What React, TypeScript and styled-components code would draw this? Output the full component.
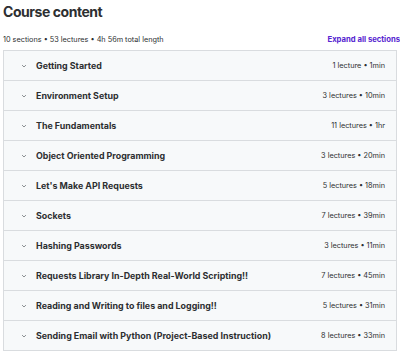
import React from "react";
import styled, { createGlobalStyle } from "styled-components";

const Global = createGlobalStyle`
  html, body { margin: 0; padding: 0; background: #fff; }
  body { font-family: Inter, "Noto Sans", sans-serif; color: #2d2f31; }
`;

const Page = styled.div`
  width: 400px;
  height: 352px;
  overflow: hidden;
  padding: 0 0 0 3px;
  box-sizing: border-box;
`;

const Title = styled.h2`
  margin: 0;
  padding-top: 2px;
  font-size: 14px;
  font-weight: 700;
  line-height: 20px;
  letter-spacing: -0.45px;
  color: #2d2f31;
`;

const Meta = styled.div`
  display: flex;
  justify-content: space-between;
  align-items: center;
  margin-top: 12px;
  height: 12px;
  font-size: 7.3px;
  line-height: 12px;
`;

const Summary = styled.span`
  color: #2d2f31;
`;

const Expand = styled.button`
  border: none;
  background: none;
  padding: 0;
  font: inherit;
  font-size: 7.7px;
  font-weight: 700;
  color: #5624d0;
  cursor: pointer;
`;

const List = styled.div`
  margin-top: 4px;
  width: 394px;
  border: 1px solid #d9dcdf;
  box-sizing: border-box;
`;

const Row = styled.div`
  display: flex;
  align-items: center;
  height: 29px;
  padding: 0 11px 0 16px;
  background: #f7f9fa;
  border-top: 1px solid #d9dcdf;
  &:first-child { border-top: none; }
`;

const Chevron = styled.svg`
  width: 8px;
  height: 8px;
  flex: none;
  color: #555a5e;
`;

const SectionTitle = styled.span`
  flex: 1;
  margin-left: 8px;
  font-size: 8.9px;
  font-weight: 700;
  color: #2d2f31;
  white-space: nowrap;
`;

const SectionMeta = styled.span`
  font-size: 7.3px;
  color: #2d2f31;
  white-space: nowrap;
`;

const sections: [string, string][] = [
  ["Getting Started", "1 lecture • 1min"],
  ["Environment Setup", "3 lectures • 10min"],
  ["The Fundamentals", "11 lectures • 1hr"],
  ["Object Oriented Programming", "3 lectures • 20min"],
  ["Let's Make API Requests", "5 lectures • 18min"],
  ["Sockets", "7 lectures • 39min"],
  ["Hashing Passwords", "3 lectures • 11min"],
  ["Requests Library In-Depth Real-World Scripting!!", "7 lectures • 45min"],
  ["Reading and Writing to files and Logging!!", "5 lectures • 31min"],
  ["Sending Email with Python (Project-Based Instruction)", "8 lectures • 33min"],
];

export default function App() {
  return (
    <Page>
      <Global />
      <Title>Course content</Title>
      <Meta>
        <Summary>10 sections • 53 lectures • 4h 56m total length</Summary>
        <Expand>Expand all sections</Expand>
      </Meta>
      <List>
        {sections.map(([t, m]) => (
          <Row key={t}>
            <Chevron viewBox="0 0 24 24" fill="none" stroke="currentColor" strokeWidth="2" strokeLinecap="round" strokeLinejoin="round">
              <path d="M7 10l5 5 5-5" />
            </Chevron>
            <SectionTitle>{t}</SectionTitle>
            <SectionMeta>{m}</SectionMeta>
          </Row>
        ))}
      </List>
    </Page>
  );
}
